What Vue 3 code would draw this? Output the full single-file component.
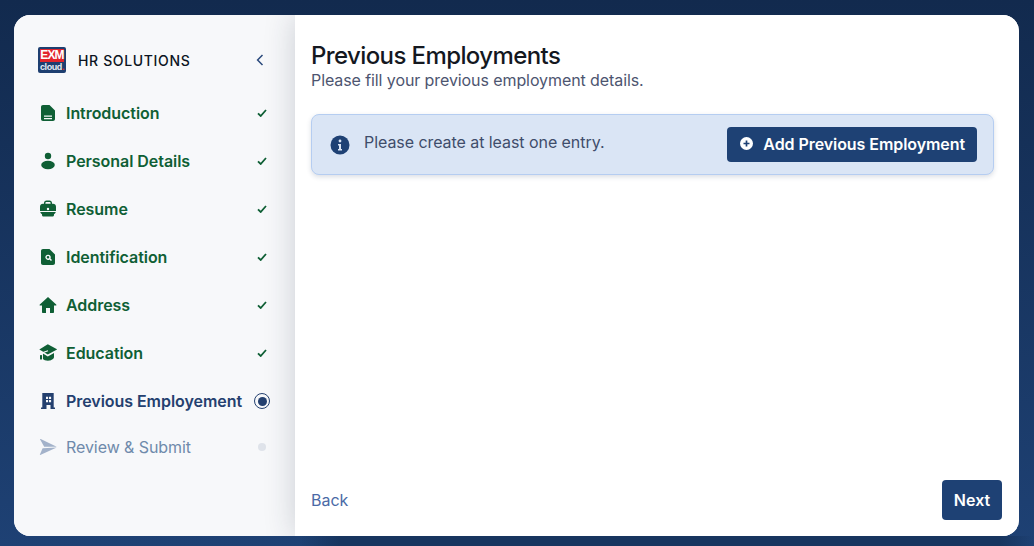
<script setup>
const steps = [
  { label: 'Introduction', icon: 'file', state: 'done' },
  { label: 'Personal Details', icon: 'user', state: 'done' },
  { label: 'Resume', icon: 'case', state: 'done' },
  { label: 'Identification', icon: 'search', state: 'done' },
  { label: 'Address', icon: 'home', state: 'done' },
  { label: 'Education', icon: 'cap', state: 'done' },
  { label: 'Previous Employement', icon: 'building', state: 'active' },
  { label: 'Review & Submit', icon: 'plane', state: 'todo' }
]
</script>

<template>
  <div class="page">
    <div class="card">
      <aside class="side">
        <div class="brand">
          <div class="logo">
            <span class="logo-top">EXM</span>
            <span class="logo-bottom">cloud<i>.</i></span>
          </div>
          <span class="brand-name">HR SOLUTIONS</span>
          <svg class="collapse" width="8" height="12" viewBox="0 0 8 12">
            <path d="M6.5 1 1.6 6l4.9 5" fill="none" stroke="currentColor" stroke-width="1.5" />
          </svg>
        </div>

        <ul class="steps">
          <li v-for="step in steps" :key="step.label" class="step" :class="step.state">
            <span class="step-icon">
              <svg width="18" height="18" viewBox="0 0 18 18" fill="currentColor">
                <template v-if="step.icon === 'file'">
                  <path fill-rule="evenodd" d="M4 1h6.500L16 6.500V15c0 1.200-.8 2-2 2H4c-1.200 0-2-.8-2-2V3c0-1.200.8-2 2-2Zm1 10.500v1.200h8v-1.200H5Zm0 2.500v1.200h8V14H5Z" />
                </template>
                <template v-else-if="step.icon === 'user'">
                  <circle cx="9" cy="4" r="3.200" />
                  <ellipse cx="9" cy="13" rx="6.800" ry="4.200" />
                </template>
                <template v-else-if="step.icon === 'case'">
                  <path fill-rule="evenodd" d="M5 4.500V3c0-1.500 1-2.500 2.500-2.500h3C12 .5 13 1.500 13 3v1.500h-1.400V3c0-.7-.4-1.100-1.100-1.100h-3c-.7 0-1.100.4-1.100 1.100v1.500H5Z" />
                  <path fill-rule="evenodd" d="M4 3.800h10c1.800 0 3 1.200 3 3V11H1V6.800c0-1.800 1.200-3 3-3Zm5 4a1.200 1.200 0 1 0 0 2.400 1.200 1.200 0 0 0 0-2.400Z" />
                  <path d="M1.300 12h15.400c-.2 1-.7 1.800-1.700 2.200V15c0 1-.8 1.600-1.800 1.600H4.800c-1 0-1.800-.6-1.800-1.600v-.8c-1-.4-1.500-1.200-1.700-2.200Z" />
                </template>
                <template v-else-if="step.icon === 'search'">
                  <path fill-rule="evenodd" d="M4 1h6.500L16 6.500V15c0 1.200-.8 2-2 2H4c-1.200 0-2-.8-2-2V3c0-1.200.8-2 2-2Zm5 5.700a2.600 2.600 0 1 0 1.500 4.700l1.500 1.500 1-1-1.500-1.500A2.600 2.600 0 0 0 9 6.700ZM9 8a1.300 1.300 0 1 1 0 2.600A1.300 1.300 0 0 1 9 8Z" />
                </template>
                <template v-else-if="step.icon === 'home'">
                  <path d="M9 1 .8 8.400c-.5.500-.2 1.100.4 1.100H3V16c0 .6.400 1 1 1h3v-5h4v5h3c.6 0 1-.4 1-1V9.500h1.800c.6 0 .9-.6.400-1.100L9 1Z" />
                </template>
                <template v-else-if="step.icon === 'cap'">
                  <path d="M8.800.300.300 5.400 8.800 10.600l9.400-5.200L8.800.300Z" />
                  <path d="M3.500 9.300 8.800 12.400l6.200-3.300V13c0 2-2.900 3.700-6 3.700-2.400 0-4.200-.8-5.500-2V9.300Z" />
                  <path d="M9 6.800 4.800 8.300c-.9.300-1.500 1-1.500 2V15" fill="none" stroke="#f7f8fa" stroke-width="1.200" />
                  <rect x="1" y="11" width="2" height="4.500" rx=".5" />
                </template>
                <template v-else-if="step.icon === 'building'">
                  <path fill-rule="evenodd" d="M3.300 1h11.400v14.500H16V17h-4.500v-4h-4v4H2v-1.500h1.300V1ZM7 4.700V7h2.100V4.700H7Zm3 0V7h2.100V4.700H10ZM7 8v2.300h2.100V8H7Zm3 0v2.300h2.100V8H10Z" />
                </template>
                <template v-else>
                  <path d="M1 1.300c0-.4.300-.5.700-.3l16 7.800H5.200L1 1.300Z" />
                  <path d="M1.200 17c-.3.100-.4-.1-.3-.4L3.600 10.300l14.100-.8L1.200 17Z" />
                </template>
              </svg>
            </span>
            <span class="step-label">{{ step.label }}</span>
            <svg v-if="step.state === 'done'" class="tick" width="10" height="8" viewBox="0 0 10 8">
              <path d="M1 4.300 3.700 7 9 1" fill="none" stroke="currentColor" stroke-width="1.800" />
            </svg>
            <span v-else-if="step.state === 'active'" class="radio"><span></span></span>
            <span v-else class="dot"></span>
          </li>
        </ul>
      </aside>

      <main class="content">
        <h1>Previous Employments</h1>
        <p class="sub">Please fill your previous employment details.</p>

        <div class="notice">
          <svg class="info" width="20" height="20" viewBox="0 0 20 20">
            <circle cx="10" cy="10" r="9.500" fill="#1e4174" />
            <circle cx="10" cy="6" r="1.400" fill="#dae5f5" />
            <path d="M8 9h3v5h1v1.500H8V14h1v-3.500H8V9Z" fill="#dae5f5" />
          </svg>
          <span class="notice-text">Please create at least one entry.</span>
          <button class="add">
            <svg width="13" height="13" viewBox="0 0 13 13">
              <circle cx="6.500" cy="6.500" r="6.500" fill="#fff" />
              <path d="M6.500 3.500v6M3.500 6.500h6" stroke="#1e4174" stroke-width="1.700" />
            </svg>
            Add Previous Employment
          </button>
        </div>

        <div class="actions">
          <a class="back">Back</a>
          <button class="next">Next</button>
        </div>
      </main>
    </div>
  </div>
</template>

<style>
html, body {
  margin: 0;
  height: 100%;
  overflow: hidden;
}
</style>

<style scoped>
.page {
  box-sizing: border-box;
  width: 1034px;
  height: 546px;
  padding: 15px 15px 10px 14px;
  background:
    linear-gradient(90deg, transparent 300px, #17355f 340px, #17355f 1000px, transparent 1034px) bottom / 100% 10px no-repeat,
    linear-gradient(180deg, #122a4e 0%, #1e4174 100%);
  font-family: Inter, "Liberation Sans", sans-serif;
}

.card {
  display: flex;
  height: 100%;
  border-radius: 16px;
  overflow: hidden;
  background: #fff;
}

.side {
  box-sizing: border-box;
  flex: 0 0 281px;
  padding: 32px 24px 0 24px;
  background: #f7f8fa;
}

.brand {
  display: flex;
  align-items: center;
  height: 26px;
  margin-bottom: 16px;
}

.logo {
  display: flex;
  flex-direction: column;
  align-items: center;
  box-sizing: border-box;
  width: 28px;
  height: 26px;
  padding-top: 2px;
  border-radius: 2px;
  background: #1e3f70;
}

.logo-top {
  width: 24px;
  height: 13px;
  background: #e2252c;
  color: #fff;
  font-family: "Liberation Sans", sans-serif;
  font-size: 12px;
  font-weight: 700;
  line-height: 13px;
  text-align: center;
  letter-spacing: -0.9px;
}

.logo-bottom {
  color: #e8edf5;
  font-family: "Liberation Sans", sans-serif;
  font-size: 9px;
  font-weight: 700;
  line-height: 10px;
  letter-spacing: -0.4px;
}

.logo-bottom i {
  color: #e2252c;
  font-style: normal;
}

.brand-name {
  margin-left: 12px;
  color: #0c1422;
  font-size: 14px;
  font-weight: 500;
  letter-spacing: 0.65px;
}

.collapse {
  margin-left: auto;
  margin-right: 7px;
  color: #2a4a7c;
}

.steps {
  margin: 0;
  padding: 0;
  list-style: none;
}

.step {
  display: flex;
  align-items: center;
  height: 48px;
  font-size: 16px;
  font-weight: 600;
  letter-spacing: -0.05px;
}

.step:last-child {
  height: 44px;
}

.step.done {
  color: #0f5f35;
}

.step.active {
  color: #24406f;
}

.step.todo {
  color: #6f8aab;
  font-weight: 400;
  letter-spacing: -0.07px;
}

.step.todo .step-icon {
  color: #a3b2ca;
}

.step-icon {
  display: flex;
  width: 28px;
  margin-left: 1px;
  margin-right: -1px;
}

.step-label {
  flex: 1;
  white-space: nowrap;
}

.tick {
  margin-right: 4px;
}

.radio {
  display: flex;
  align-items: center;
  justify-content: center;
  box-sizing: border-box;
  width: 16px;
  height: 16px;
  margin-right: 1px;
  border: 1.500px solid #24406f;
  border-radius: 50%;
}

.radio span {
  width: 9px;
  height: 9px;
  border-radius: 50%;
  background: #24406f;
}

.dot {
  width: 8px;
  height: 8px;
  margin-right: 5px;
  border-radius: 50%;
  background: #dfe3ea;
}

.content {
  position: relative;
  display: flex;
  flex: 1;
  flex-direction: column;
  box-sizing: border-box;
  padding: 26px 17px 16px 16px;
  background: #fff;
  box-shadow: 0 0 30px rgba(30, 40, 60, 0.2);
}

h1 {
  margin: 0;
  color: #14181f;
  font-size: 24px;
  font-weight: 500;
  line-height: 30px;
  letter-spacing: -0.6px;
}

.sub {
  margin: -1px 0 0;
  color: #4d5570;
  font-size: 16px;
  line-height: 20px;
  letter-spacing: -0.09px;
}

.notice {
  display: flex;
  align-items: center;
  box-sizing: border-box;
  width: 683px;
  height: 61px;
  margin-top: 24px;
  padding: 0 16px 0 18px;
  border: 1px solid #b5cdf1;
  border-radius: 8px;
  background: #dae5f5;
  box-shadow: 0 2px 5px rgba(30, 50, 90, 0.16);
}

.notice-text {
  flex: 1;
  margin-left: 14px;
  margin-bottom: 5px;
  color: #3f4d6b;
  font-size: 16px;
  letter-spacing: -0.06px;
}

.add {
  display: flex;
  align-items: center;
  gap: 10px;
  height: 35px;
  padding: 0 12px 2px 13px;
  border: 0;
  border-radius: 4px;
  background: #1e4174;
  color: #fff;
  font-family: inherit;
  font-size: 16px;
  font-weight: 600;
  letter-spacing: -0.07px;
}

.actions {
  display: flex;
  align-items: center;
  justify-content: space-between;
  margin-top: auto;
}

.back {
  color: #4b6aa6;
  font-size: 16px;
}

.next {
  width: 60px;
  height: 40px;
  border: 0;
  border-radius: 4px;
  background: #1e4174;
  color: #fff;
  font-family: inherit;
  font-size: 16px;
  font-weight: 600;
}
</style>
